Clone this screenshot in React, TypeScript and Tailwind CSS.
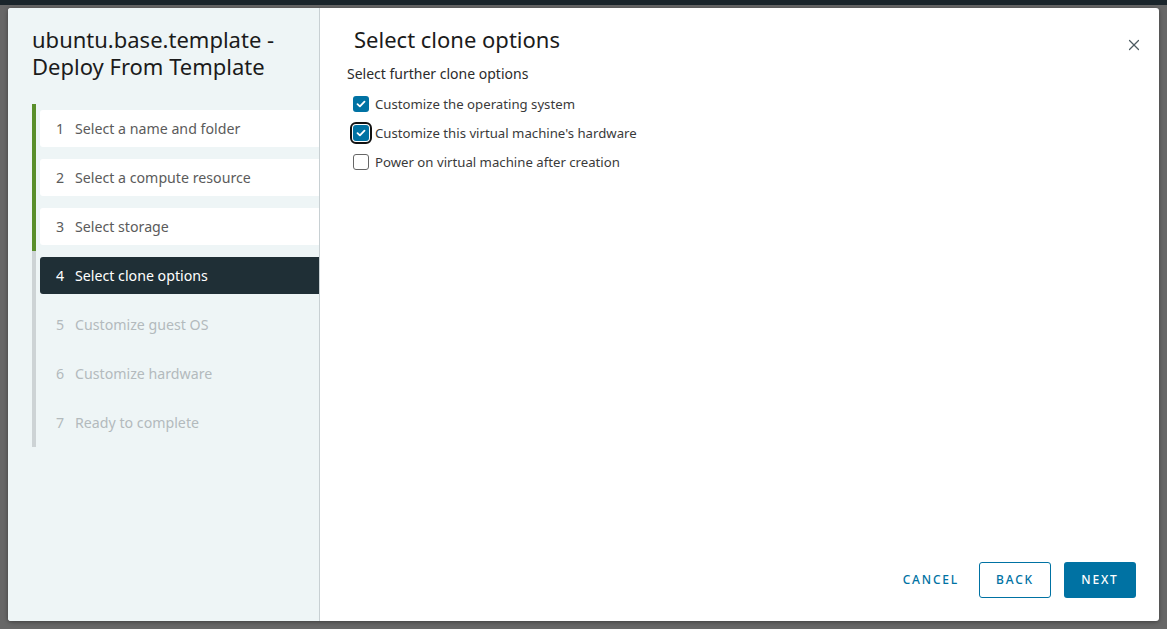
import React from 'react';
import { X } from 'lucide-react';

type Step = { n: number; label: string; state: 'done' | 'active' | 'todo' };

const steps: Step[] = [
  { n: 1, label: 'Select a name and folder', state: 'done' },
  { n: 2, label: 'Select a compute resource', state: 'done' },
  { n: 3, label: 'Select storage', state: 'done' },
  { n: 4, label: 'Select clone options', state: 'active' },
  { n: 5, label: 'Customize guest OS', state: 'todo' },
  { n: 6, label: 'Customize hardware', state: 'todo' },
  { n: 7, label: 'Ready to complete', state: 'todo' },
];

const options = [
  { label: 'Customize the operating system', checked: true, focused: false },
  { label: "Customize this virtual machine's hardware", checked: true, focused: true },
  { label: 'Power on virtual machine after creation', checked: false, focused: false },
];

const Checkbox: React.FC<{ checked: boolean; focused: boolean }> = ({ checked, focused }) => (
  <span
    className={`flex h-4 w-4 shrink-0 items-center justify-center rounded-[3px] ${
      checked ? 'bg-[#0072a3]' : 'border border-[#666] bg-white'
    } ${focused ? 'outline outline-2 outline-offset-[1px] outline-[#111]' : ''}`}
  >
    {checked && (
      <svg width="10" height="8" viewBox="0 0 10 8" fill="none">
        <path d="M1.5 4.2 L3.9 6.4 L8.5 1.6" stroke="white" strokeWidth="1.8" strokeLinecap="round" strokeLinejoin="round" />
      </svg>
    )}
  </span>
);

export default function App() {
  return (
    <div className="flex h-[629px] w-[1167px] flex-col overflow-hidden bg-[#676767] font-['Noto_Sans',sans-serif]">
      {/* dimmed app header behind the modal */}
      <div className="h-[5px] bg-[#1a252b]" />

      <div className="px-2 pt-[3px]">
        <div className="flex h-[613px] overflow-hidden rounded-[3px] bg-white shadow-[0_1px_4px_rgba(0,0,0,0.4)]">
          {/* Wizard step navigation */}
          <aside className="w-[312px] shrink-0 border-r border-[#c8d0d3] bg-[#eef5f6] pl-6 pt-[18px]">
            <h1 className="text-[22px] leading-[27px] text-[#1b1b1b]">
              ubuntu.base.template -
              <br />
              Deploy From Template
            </h1>

            <ul className="mt-6">
              {steps.map((s) => (
                <li
                  key={s.n}
                  className={`border-l-4 py-[6px] pl-1 ${
                    s.state === 'done' ? 'border-[#5a8f2b]' : 'border-[#cdd3d5]'
                  }`}
                >
                  <div
                    className={`flex h-[37px] items-center rounded-l-[3px] pl-4 text-[14.2px] ${
                      s.state === 'done'
                        ? 'bg-white text-[#5b5b5b]'
                        : s.state === 'active'
                          ? 'bg-[#1f2f36] text-white'
                          : 'text-[#b3babd]'
                    }`}
                  >
                    <span className="w-[19px]">{s.n}</span>
                    <span>{s.label}</span>
                  </div>
                </li>
              ))}
            </ul>
          </aside>

          {/* Step content */}
          <section className="flex flex-1 flex-col pl-[27px] pr-[23px] pt-4 pb-[23px]">
            <div className="flex items-start justify-between">
              <h2 className="ml-[7px] text-[22px] leading-[30px] text-[#1b1b1b]">Select clone options</h2>
              <button className="mt-3 mr-[-7px] text-[#4d5b61]">
                <X size={18} strokeWidth={1.6} />
              </button>
            </div>

            <p className="mt-[9px] text-[14px] text-[#2b2b2b]">Select further clone options</p>

            <div className="mt-3 flex flex-col gap-[13px] pl-[6px]">
              {options.map((o) => (
                <label key={o.label} className="flex items-center gap-[6px] text-[13.2px] leading-4 text-[#3a3a3a]">
                  <Checkbox checked={o.checked} focused={o.focused} />
                  {o.label}
                </label>
              ))}
            </div>

            <div className="mt-auto flex items-center justify-end gap-[13px]">
              <button className="mr-[7px] h-9 text-[12px] font-medium tracking-[0.15em] text-[#0072a3]">
                CANCEL
              </button>
              <button className="h-9 w-[72px] rounded-[3px] border border-[#0072a3] text-[12px] font-medium tracking-[0.15em] text-[#0072a3]">
                BACK
              </button>
              <button className="h-9 w-[72px] rounded-[3px] bg-[#0072a3] text-[12px] font-medium tracking-[0.15em] text-white">
                NEXT
              </button>
            </div>
          </section>
        </div>
      </div>
    </div>
  );
}
